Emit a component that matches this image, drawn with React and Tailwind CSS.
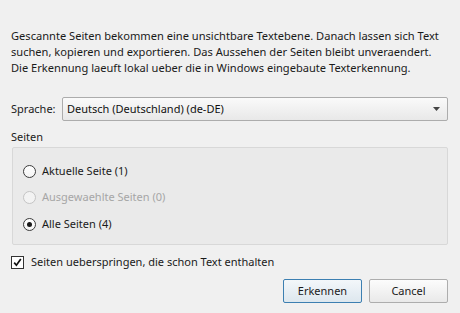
import React from "react";

function Radio({ checked, disabled, label }) {
  return (
    <div className="flex items-center h-[14px]">
      <div
        className={
          "w-[13px] h-[13px] rounded-full border flex items-center justify-center " +
          (disabled
            ? "border-[#c4c4c4] bg-[#f3f3f3]"
            : "border-[#3c3c3c] bg-gradient-to-b from-[#ffffff] to-[#f4f4f4]")
        }
      >
        {checked && <div className="w-[5px] h-[5px] rounded-full bg-[#1a1a1a]" />}
      </div>
      <span className={"ml-[6px] " + (disabled ? "text-[#a6a6a6]" : "text-[#1a1a1a]")}>{label}</span>
    </div>
  );
}

export default function App() {
  return (
    <div
      className="w-[460px] h-[313px] bg-[#f0f0f0] text-[#1a1a1a] text-[11px] overflow-hidden flex flex-col"
      style={{ fontFamily: '"Noto Sans", "Segoe UI", sans-serif' }}
    >
      <div className="pt-[28px] px-[11px] text-[11.1px] leading-[16px] whitespace-nowrap">
        <p>Gescannte Seiten bekommen eine unsichtbare Textebene. Danach lassen sich Text</p>
        <p>suchen, kopieren und exportieren. Das Aussehen der Seiten bleibt unveraendert.</p>
        <p>Die Erkennung laeuft lokal ueber die in Windows eingebaute Texterkennung.</p>
      </div>

      <div className="mt-[21px] flex items-center pl-[11px] pr-[12px] h-[24px]">
        <span className="w-[51px]">Sprache:</span>
        <div className="flex-1 h-[24px] rounded-[2px] border border-[#acacac] bg-gradient-to-b from-[#fafafa] to-[#e8e8e8] flex items-center pl-[4px] pr-[6px]">
          <span className="flex-1 text-[#111]">Deutsch (Deutschland) (de-DE)</span>
          <svg width="8" height="5" viewBox="0 0 8 5">
            <path d="M0 0 H7 L3.5 4 Z" fill="#444" />
          </svg>
        </div>
      </div>

      <div className="mt-[9px] px-[11px] leading-[14px]">Seiten</div>

      <div className="mt-[3px] ml-[12px] mr-[12px] h-[98px] border border-[#d8d8d8] rounded-[2px] bg-[#eaeaea] flex flex-col pl-[10px] pt-[16px] gap-[12.5px]">
        <Radio label="Aktuelle Seite (1)" />
        <Radio label="Ausgewaehlte Seiten (0)" disabled />
        <Radio label="Alle Seiten (4)" checked />
      </div>

      <div className="mt-[10px] pl-[11px] flex items-center h-[14px]">
        <div className="w-[13px] h-[13px] border border-[#333] bg-white flex items-center justify-center">
          <svg width="9" height="9" viewBox="0 0 9 9">
            <path d="M1.2 4.6 L3.4 7.2 L7.8 1" fill="none" stroke="#111" strokeWidth="1.7" />
          </svg>
        </div>
        <span className="ml-[7px]">Seiten ueberspringen, die schon Text enthalten</span>
      </div>

      <div className="mt-[10px] flex justify-end gap-[7px] pr-[12px]">
        <div className="w-[79px] h-[24px] rounded-[2px] border border-[#3c7fb1] bg-gradient-to-b from-[#f3f7fa] to-[#dde7ee] flex items-center justify-center">
          Erkennen
        </div>
        <div className="w-[79px] h-[24px] rounded-[2px] border border-[#adadad] bg-gradient-to-b from-[#fcfcfc] to-[#e9e9e9] flex items-center justify-center">
          Cancel
        </div>
      </div>
    </div>
  );
}
